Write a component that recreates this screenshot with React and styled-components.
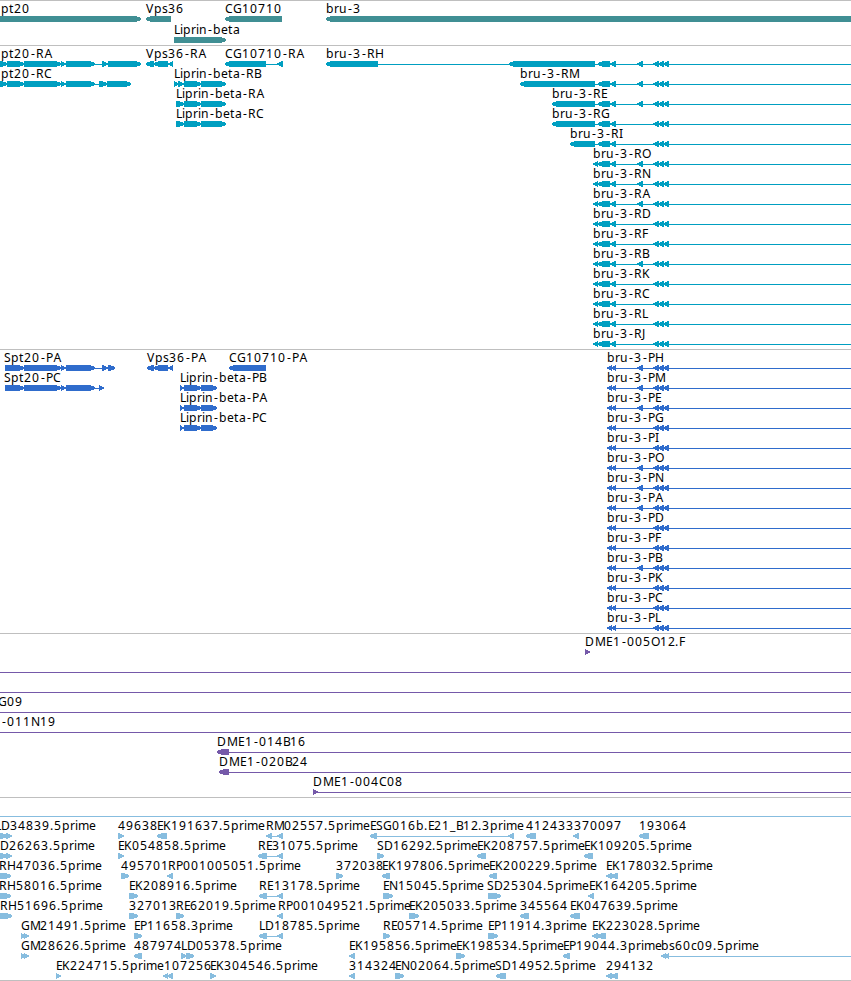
import React from "react";
import styled, { createGlobalStyle } from "styled-components";

const GlobalStyle = createGlobalStyle`
  body {
    margin: 0;
    background: #fff;
    overflow: hidden;
  }
`;

const Browser = styled.main`
  display: flex;
  flex-direction: column;
  width: 851px;
  height: 981px;
  overflow: hidden;
  border-bottom: 1px solid #bfbfbf;
  box-sizing: border-box;
`;

const Track = styled.section`
  display: flex;
  flex-direction: column;
  flex-shrink: 0;
  gap: ${(props) => props.$gap || 0}px;
  padding: 2px 0 ${(props) => (props.$last ? 0 : 1)}px;
  border-top: 1px solid #bfbfbf;
  color: ${(props) => props.$color};
`;

const Lane = styled.svg`
  display: block;
  width: 851px;
  height: 20px;
  flex-shrink: 0;
  overflow: visible;
  fill: currentColor;
  shape-rendering: crispEdges;
`;

const Name = styled.text`
  fill: #000;
  font-family: "Noto Sans", "DejaVu Sans", sans-serif;
  font-size: 12.15px;
  white-space: pre;
`;

// whole pixel advances of the label font
const ADVANCE = {
  A: 8, B: 7, C: 8, D: 9, E: 6, F: 7, G: 9, H: 9, I: 4, J: 4, K: 8, L: 6,
  M: 10, N: 9, O: 9, P: 7, R: 8, S: 7, V: 8,
  a: 7, b: 8, c: 6, e: 7, i: 3, m: 11, n: 8, p: 8, r: 5, s: 6, t: 5, u: 8,
  "-": 6, ".": 4, _: 6,
};

const KERN = { DM: 1, ME: 1, E1: 1, "2.": -1, RA: 0.5, PA: 0.5 };

const glyphPositions = (text, start) => {
  let x = start;
  return text
    .split("")
    .map((char, i) => {
      x += KERN[text[i - 1] + char] || 0;
      const at = char === "-" ? x + 1 : x;
      x += ADVANCE[char] || 8;
      return at;
    })
    .join(" ");
};

const exonPoints = ([from, to], dir) => {
  const tip = Math.min(5, to - from);
  // narrow exons are drawn as a plain arrow head
  const blunt = to - from > 6 ? 1 : 0.55;
  if (dir === "<") {
    return `${to},13 ${from + tip},13 ${from},${16 - blunt} ${from},${16 + blunt} ${from + tip},19 ${to},19`;
  }
  return `${from},13 ${to - tip},13 ${to},${16 - blunt} ${to},${16 + blunt} ${to - tip},19 ${from},19`;
};

// f(label, x, direction, exons, end of the line)
const f = (name, x, dir, exons = [], end) => ({ name, x, dir, exons, end });

const Feature = ({ name, x, dir, exons, end }) => {
  const starts = exons.map((e) => e[0]);
  const stops = exons.map((e) => e[1]);
  const from = exons.length ? Math.min(...starts) + 1 : 0;
  const to = end || Math.max(...stops) - 1;
  return (
    <g>
      <rect x={from} y={16} width={Math.max(to - from, 0)} height={1} />
      {exons.map((exon) => (
        <polygon key={exon.join()} points={exonPoints(exon, dir)} />
      ))}
      {name && <Name x={glyphPositions(name, x)} y={10}>{name}</Name>}
    </g>
  );
};

const TrackView = ({ lanes, ...rest }) => (
  <Track {...rest}>
    {lanes.map((features, i) => (
      <Lane key={i} viewBox="0 0 851 20">
        {features.map((feature, j) => (
          <Feature key={j} {...feature} />
        ))}
      </Lane>
    ))}
  </Track>
);

const W = 851;
const far = [[653, 659], [658, 664], [663, 669]];
const mid = [637, 643];

// bru-3 isoforms share the exons on the right
const bruR = (id, x, optional, left = []) =>
  f(`bru-3-R${id}`, x, "<",
    [...left, [598, 610], [610, 616], ...(optional ? [mid] : []), ...far], W);

const bruP = (id, optional) =>
  f(`bru-3-P${id}`, 607, "<",
    [[607, 612], [611, 616], ...(optional ? [mid] : []), ...far], W);

const genes = [
  [
    f("pt20", 1, ">", [[-10, 141]]),
    f("Vps36", 146, "<", [[146, 171]]),
    f("CG10710", 225, "<", [[225, 282]]),
    f("bru-3", 326, "<", [[326, 860]]),
  ],
  [f("Liprin-beta", 174, ">", [[174, 226]])],
];

const spt = [[-10, 7], [7, 24], [24, 61], [61, 66], [66, 95]];
const liprin = [[176, 184], [184, 201], [201, 226]];
const short = [[593, 598]];

const transcripts = [
  [
    f("pt20-RA", 1, ">", [...spt, [102, 108], [108, 141]]),
    f("Vps36-RA", 146, "<", [[146, 154], [154, 168], [168, 173]]),
    f("CG10710-RA", 225, "<", [[225, 266], [277, 283]]),
    bruR("H", 326, true, [[326, 378], [509, 595]]),
  ],
  [
    f("pt20-RC", 1, ">", [...spt, [99, 107], [107, 131]]),
    f("Liprin-beta-RB", 174, ">", [[174, 179], [178, 184], [184, 201], [201, 226]]),
    bruR("M", 520, true, [[520, 595]]),
  ],
  [
    f("Liprin-beta-RA", 176, ">", liprin),
    bruR("E", 552, true, [[552, 595]]),
  ],
  [
    f("Liprin-beta-RC", 176, ">", liprin),
    bruR("G", 552, false, [[552, 595]]),
  ],
  [bruR("I", 570, false, [[570, 595]])],
  [bruR("O", 593, true, short)],
  [bruR("N", 593, true, short)],
  [bruR("A", 593, true, short)],
  [bruR("D", 593, false, short)],
  [bruR("F", 593, false, short)],
  [bruR("B", 593, true, short)],
  [bruR("K", 593, false, short)],
  [bruR("C", 593, false, short)],
  [bruR("L", 593, false, short)],
  [bruR("J", 593, false, short)],
];

const sptP = [[5, 24], [24, 61], [61, 66], [66, 95]];
const liprinP = [[180, 184], [184, 201], [201, 217]];

const proteins = [
  [
    f("Spt20-PA", 4, ">", [...sptP, [102, 108], [108, 115]]),
    f("Vps36-PA", 147, "<", [[147, 154], [154, 168], [168, 173]]),
    f("CG10710-PA", 229, "<", [[229, 266]]),
    bruP("H", true),
  ],
  [
    f("Spt20-PC", 4, ">", [...sptP, [99, 104]]),
    f("Liprin-beta-PB", 180, ">", liprinP),
    bruP("M", true),
  ],
  [f("Liprin-beta-PA", 180, ">", liprinP), bruP("E", true)],
  [f("Liprin-beta-PC", 180, ">", liprinP), bruP("G", false)],
  [bruP("I", false)],
  [bruP("O", true)],
  [bruP("N", true)],
  [bruP("A", true)],
  [bruP("D", false)],
  [bruP("F", false)],
  [bruP("B", true)],
  [bruP("K", false)],
  [bruP("C", false)],
  [bruP("L", false)],
];

const bacs = [
  [f("DME1-005O12.F", 585, ">", [[585, 590]])],
  [f("", 0, "<", [], W)],
  [f("", 0, "<", [], W)],
  [f("G09", -2, "<", [], W)],
  [f("-011N19", 1, "<", [], W)],
  [f("DME1-014B16", 217, "<", [[217, 229]], W)],
  [f("DME1-020B24", 219, "<", [[219, 229]], W)],
  [f("DME1-004C08", 313, ">", [[313, 318]], W)],
];

const tail = [277, 283];

const ests = [
  [f("", 0, "<", [], W)],
  [
    f("LD34839.5prime", -5, ">", [[-5, 7], [6, 12]]),
    f("49638", 118, ">", [[118, 124]]),
    f("EK191637.5prime", 157, "<", [[157, 167]]),
    f("RM02557.5prime", 266, "<", [[266, 272], tail]),
    f("ESG016b.E21_B12.3prime", 370, "<", [[370, 377], [508, 514]]),
    f("412433", 526, "<", [[526, 536]]),
    f("370097", 574, "<", [[573, 579]]),
    f("193064", 639, "<", [[639, 649]]),
  ],
  [
    f("D26263.5prime", 0, ">", [[-5, 7], [6, 12]]),
    f("EK054858.5prime", 118, ">", [[118, 124]]),
    f("RE31075.5prime", 258, "<", [[258, 267], tail]),
    f("SD16292.5prime", 377, ">", [[377, 384]]),
    f("EK208757.5prime", 477, "<", [[477, 486]]),
    f("EK109205.5prime", 584, "<", [[584, 593]]),
  ],
  [
    f("RH47036.5prime", -1, ">", [[-5, 11]]),
    f("495701", 121, ">", [[121, 129]]),
    f("RP001005051.5prime", 168, "<", [[167, 173]]),
    f("372038", 336, ">", [[336, 343]]),
    f("EK197806.5prime", 382, "<", [[382, 390]]),
    f("EK200229.5prime", 489, "<", [[489, 497]]),
    f("EK178032.5prime", 606, "<", [[606, 612], [611, 618]]),
  ],
  [
    f("RH58016.5prime", -1, ">", [[-5, 11]]),
    f("EK208916.5prime", 129, ">", [[129, 138]]),
    f("RE13178.5prime", 259, "<", [[259, 267], tail]),
    f("EN15045.5prime", 383, ">", [[383, 393]]),
    f("SD25304.5prime", 487, ">", [[488, 501]]),
    f("EK164205.5prime", 589, "<", [[588, 594]]),
  ],
  [
    f("RH51696.5prime", 0, ">", [[-5, 12]]),
    f("327013", 129, ">", [[129, 138]]),
    f("RE62019.5prime", 176, ">", [[176, 184]]),
    f("RP001049521.5prime", 278, "<", [tail]),
    f("EK205033.5prime", 409, ">", [[409, 419]]),
    f("345564", 520, "<", [[520, 529]]),
    f("EK047639.5prime", 570, "<", [[570, 580]]),
  ],
  [
    f("GM21491.5prime", 21, ">", [[21, 26], [24, 29]]),
    f("EP11658.3prime", 134, ">", [[134, 142]]),
    f("LD18785.5prime", 259, "<", [[259, 267], tail]),
    f("RE05714.5prime", 383, ">", [[383, 390]]),
    f("EP11914.3prime", 488, ">", [[488, 498]]),
    f("EK223028.5prime", 592, "<", [[592, 598], [597, 606]]),
  ],
  [
    f("GM28626.5prime", 21, ">", [[21, 26], [24, 29]]),
    f("487974", 134, "<", [[134, 142]]),
    f("LD05378.5prime", 181, ">", [[181, 187], [186, 194]]),
    f("EK195856.5prime", 349, "<", [[349, 355]]),
    f("EK198534.5prime", 456, ">", [[456, 465]]),
    f("EP19044.3prime", 563, "<", [[563, 570]]),
    f("bs60c09.5prime", 661, "<", [[661, 666], [664, 669]], W),
  ],
  [
    f("EK224715.5prime", 56, ">", [[56, 61]]),
    f("107256", 164, "<", [[163, 168], [167, 173]]),
    f("EK304546.5prime", 210, ">", [[210, 216]]),
    f("314324", 349, "<", [[349, 355]]),
    f("EN02064.5prime", 395, ">", [[395, 404]]),
    f("SD14952.5prime", 495, "<", [[496, 506]]),
    f("294132", 606, "<", [[606, 612], [611, 618]]),
  ],
];

const App = () => (
  <Browser>
    <GlobalStyle />
    <TrackView $color="#408f94" $gap={1} lanes={genes} />
    <TrackView $color="#009fc1" lanes={transcripts} />
    <TrackView $color="#2f6ccc" lanes={proteins} />
    <TrackView $color="#7559a9" lanes={bacs} />
    <TrackView $color="#87bddf" $last lanes={ests} />
  </Browser>
);

export default App;
